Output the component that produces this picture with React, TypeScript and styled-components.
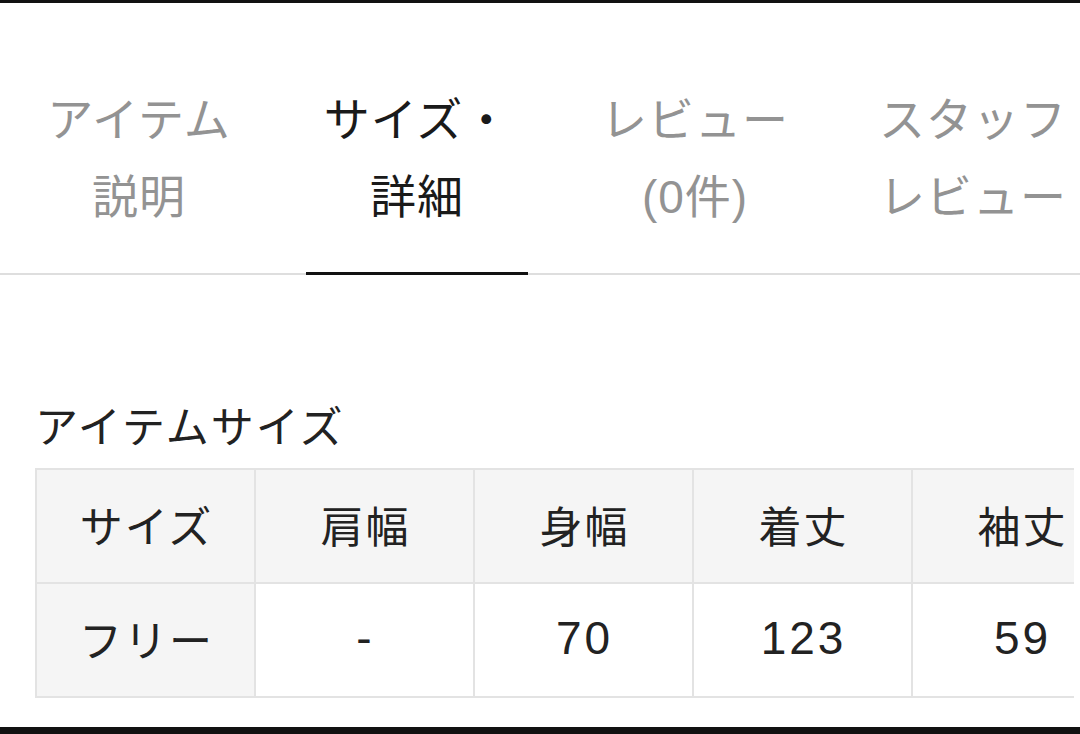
import React from 'react';
import styled, { createGlobalStyle } from 'styled-components';

const GlobalStyle = createGlobalStyle`
  html, body {
    margin: 0;
    padding: 0;
    background: #fff;
  }
  body {
    font-family: "Liberation Sans", "Noto Sans CJK JP", sans-serif;
    color: #222;
  }
`;

const tabs = [
  { lines: ['アイテム', '説明'], active: false },
  { lines: ['サイズ・', '詳細'], active: true },
  { lines: ['レビュー', '(0件)'], active: false },
  { lines: ['スタッフ', 'レビュー'], active: false },
];

const headers = ['サイズ', '肩幅', '身幅', '着丈', '袖丈'];
const rows = [['フリー', '-', '70', '123', '59']];

const App = () => {
  return (
    <Screen>
      <GlobalStyle />
      <TabBar>
        {tabs.map((t) => (
          <Tab key={t.lines[0] + t.lines[1]}>
            <TabLabel $active={t.active}>
              {t.lines.map((l) => (
                <div key={l}>{l}</div>
              ))}
            </TabLabel>
          </Tab>
        ))}
      </TabBar>
      <Content>
        <Heading>アイテムサイズ</Heading>
        <TableClip>
          <SizeTable>
            <thead>
              <tr>
                {headers.map((h) => (
                  <HeadCell key={h}>{h}</HeadCell>
                ))}
              </tr>
            </thead>
            <tbody>
              {rows.map((r) => (
                <tr key={r[0]}>
                  {r.map((c, i) => (
                    <BodyCell key={i} $label={i === 0}>
                      {c}
                    </BodyCell>
                  ))}
                </tr>
              ))}
            </tbody>
          </SizeTable>
        </TableClip>
      </Content>
    </Screen>
  );
};

const Screen = styled.div`
  box-sizing: border-box;
  width: 1080px;
  height: 734px;
  overflow: hidden;
  border-top: 3px solid #111;
  border-bottom: 7px solid #111;
  display: flex;
  flex-direction: column;
`;

const TabBar = styled.div`
  display: flex;
  padding-top: 79px;
  border-bottom: 2px solid #dedede;
`;

const Tab = styled.div`
  flex: none;
  width: 278px;
  display: flex;
  justify-content: center;
`;

const TabLabel = styled.div<{ $active: boolean }>`
  width: 222px;
  flex: none;
  text-align: center;
  font-size: 46px;
  letter-spacing: 1px;
  line-height: 77px;
  white-space: nowrap;
  color: ${(p) => (p.$active ? '#1a1a1a' : '#939393')};
  padding-bottom: 36px;
  border-bottom: 3px solid ${(p) => (p.$active ? '#111' : 'transparent')};
  margin-bottom: -2px;
  position: relative;
`;

const Content = styled.div`
  flex: 1;
  padding: 128px 0 0 35px;
`;

const Heading = styled.h3`
  margin: 0 0 15px;
  font-size: 43px;
  letter-spacing: 2px;
  font-weight: 400;
  line-height: 50px;
  color: #222;
`;

const TableClip = styled.div`
  width: 1039px;
  overflow: hidden;
`;

const SizeTable = styled.table`
  border-collapse: collapse;
  border: 2px solid #e3e3e3;
`;

const HeadCell = styled.th`
  width: 219px;
  min-width: 219px;
  height: 114px;
  box-sizing: border-box;
  padding: 0 0 5px 2px;
  background: #f5f5f5;
  border: 2px solid #e3e3e3;
  font-size: 43px;
  letter-spacing: 2px;
  font-weight: 400;
  color: #222;
  text-align: center;
  vertical-align: middle;
`;

const BodyCell = styled.td<{ $label: boolean }>`
  height: 114px;
  box-sizing: border-box;
  padding: 0 0 5px 2px;
  background: ${(p) => (p.$label ? '#f5f5f5' : '#fff')};
  border: 2px solid #e3e3e3;
  font-size: ${(p) => (p.$label ? '43px' : '46px')};
  letter-spacing: ${(p) => (p.$label ? '2px' : '3px')};
  color: #222;
  text-align: center;
  vertical-align: middle;
`;

export default App;
